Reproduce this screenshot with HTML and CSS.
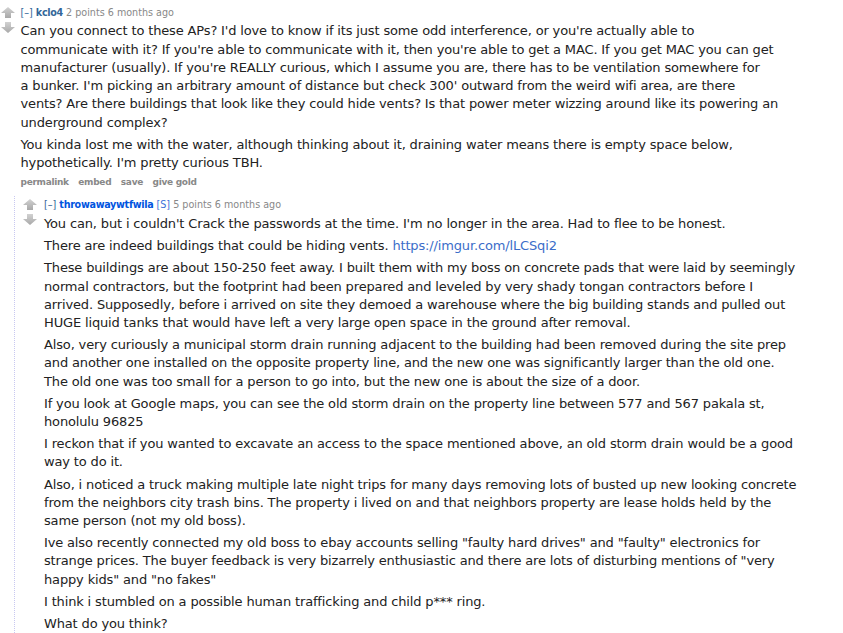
FILE: index.html
```html
<!DOCTYPE html>
<html>
<head>
<meta charset="utf-8">
<link rel="stylesheet" href="styles.css">
</head>
<body>
<div class="comment top">
  <div class="midcol">
    <svg class="arrow" width="14" height="11" viewBox="0 0 14 11"><defs><linearGradient id="g1" x1="0" y1="0" x2="0" y2="1"><stop offset="0" stop-color="#d2d2d2"/><stop offset="1" stop-color="#a8a8a8"/></linearGradient></defs><path d="M7 0 L14 6 L10 6 L10 11 L4 11 L4 6 L0 6 Z" fill="url(#g1)"/></svg>
    <svg class="arrow" width="14" height="11" viewBox="0 0 14 11"><path d="M4 0 L10 0 L10 5 L14 5 L7 11 L0 5 L4 5 Z" fill="url(#g1)"/></svg>
  </div>
  <div class="entry">
    <p class="tagline"><span class="expand">[–]</span> <span class="author">kclo4</span> <span class="score">2 points</span> <span class="time">6 months ago</span></p>
    <div class="md">
      <p>Can you connect to these APs? I'd love to know if its just some odd interference, or you're actually able to<br>communicate with it? If you're able to communicate with it, then you're able to get a MAC. If you get MAC you can get<br>manufacturer (usually). If you're REALLY curious, which I assume you are, there has to be ventilation somewhere for<br>a bunker. I'm picking an arbitrary amount of distance but check 300' outward from the weird wifi area, are there<br>vents? Are there buildings that look like they could hide vents? Is that power meter wizzing around like its powering an<br>underground complex?</p>
      <p>You kinda lost me with the water, although thinking about it, draining water means there is empty space below,<br>hypothetically. I'm pretty curious TBH.</p>
    </div>
    <ul class="buttons"><li>permalink</li><li>embed</li><li>save</li><li>give gold</li></ul>
  </div>
  <div class="child">
    <div class="comment">
      <div class="midcol">
        <svg class="arrow" width="14" height="11" viewBox="0 0 14 11"><path d="M7 0 L14 6 L10 6 L10 11 L4 11 L4 6 L0 6 Z" fill="url(#g1)"/></svg>
        <svg class="arrow" width="14" height="11" viewBox="0 0 14 11"><path d="M4 0 L10 0 L10 5 L14 5 L7 11 L0 5 L4 5 Z" fill="url(#g1)"/></svg>
      </div>
      <div class="entry">
        <p class="tagline"><span class="expand">[–]</span> <span class="author submitter">throwawaywtfwila</span> <span class="flag">[S]</span> <span class="score">5 points</span> <span class="time">6 months ago</span></p>
        <div class="md">
          <p>You can, but i couldn't Crack the passwords at the time. I'm no longer in the area. Had to flee to be honest.</p>
          <p>There are indeed buildings that could be hiding vents. <a href="#">https://imgur.com/lLCSqi2</a></p>
          <p>These buildings are about 150-250 feet away. I built them with my boss on concrete pads that were laid by seemingly<br>normal contractors, but the footprint had been prepared and leveled by very shady tongan contractors before I<br>arrived. Supposedly, before i arrived on site they demoed a warehouse where the big building stands and pulled out<br>HUGE liquid tanks that would have left a very large open space in the ground after removal.</p>
          <p>Also, very curiously a municipal storm drain running adjacent to the building had been removed during the site prep<br>and another one installed on the opposite property line, and the new one was significantly larger than the old one.<br>The old one was too small for a person to go into, but the new one is about the size of a door.</p>
          <p>If you look at Google maps, you can see the old storm drain on the property line between 577 and 567 pakala st,<br>honolulu 96825</p>
          <p>I reckon that if you wanted to excavate an access to the space mentioned above, an old storm drain would be a good<br>way to do it.</p>
          <p>Also, i noticed a truck making multiple late night trips for many days removing lots of busted up new looking concrete<br>from the neighbors city trash bins. The property i lived on and that neighbors property are lease holds held by the<br>same person (not my old boss).</p>
          <p>Ive also recently connected my old boss to ebay accounts selling "faulty hard drives" and "faulty" electronics for<br>strange prices. The buyer feedback is very bizarrely enthusiastic and there are lots of disturbing mentions of "very<br>happy kids" and "no fakes"</p>
          <p>I think i stumbled on a possible human trafficking and child p*** ring.</p>
          <p>What do you think?</p>
        </div>
      </div>
    </div>
  </div>
</div>
</body>
</html>
```

FILE: styles.css
```css
html, body {
  margin: 0;
  padding: 0;
  background: #ffffff;
}
body {
  font-family: "DejaVu Sans", Verdana, sans-serif;
  color: #222222;
  overflow: hidden;
  width: 843px;
  height: 633px;
}
.comment {
  display: grid;
  grid-template-columns: 19.5px 1fr;
  align-items: start;
}
.top {
  padding: 6.4px 0 0 1px;
}
.midcol {
  display: flex;
  flex-direction: column;
  gap: 4px;
  padding-top: 1px;
}
.arrow {
  display: block;
}
.entry {
  min-width: 0;
}
.tagline {
  margin: 0;
  font-size: 9.6px;
  line-height: 14px;
  color: #888888;
  white-space: nowrap;
}
.expand {
  color: #369;
}
.author {
  color: #369;
  font-weight: bold;
  letter-spacing: -0.3px;
}
.submitter {
  color: #0055df;
}
.flag {
  color: #3a6fd8;
}
.md {
  font-size: 13px;
  letter-spacing: -0.15px;
  padding-top: 2.1px;
}
.md p {
  margin: 0 0 4px 0;
  line-height: 18.2px;
  white-space: nowrap;
}
.md a {
  color: #3b6dc9;
  text-decoration: none;
}
.buttons {
  list-style: none;
  margin: -1.5px 0 0 0;
  padding: 0;
  display: flex;
  gap: 9.5px;
  font-size: 9px;
  font-weight: bold;
  letter-spacing: -0.3px;
  color: #888888;
  line-height: 14px;
}
.child {
  grid-column: 1 / span 2;
  margin: 7px 0 0 13px;
  border-left: 1px dotted #c8c8f0;
  padding: 2.3px 0 0 8px;
}
.child .comment {
  grid-template-columns: 21px 1fr;
}
.child .md {
  padding-top: 3px;
}
```
